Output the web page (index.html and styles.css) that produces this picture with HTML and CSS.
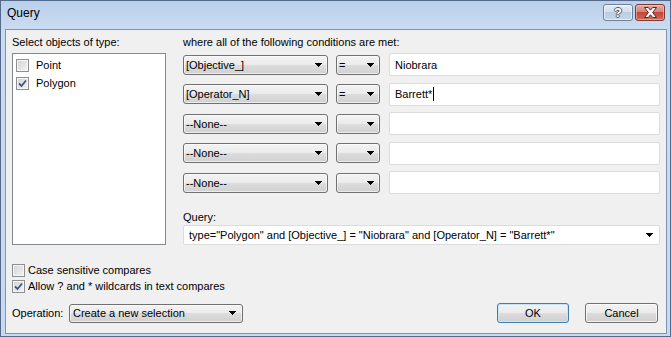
FILE: index.html
```html
<!DOCTYPE html>
<html>
<head>
<meta charset="utf-8">
<title>Query</title>
<link rel="stylesheet" href="styles.css">
</head>
<body>
<div class="window">
  <div class="titlebar">
    <span class="title">Query</span>
    <div class="caption-buttons">
      <div class="cap-btn help">?</div>
      <div class="cap-btn close">
        <svg width="13" height="11" viewBox="0 0 13 11"><polygon points="0.5,0.5 4.3,0.5 6.5,3.2 8.7,0.5 12.5,0.5 8.6,5.5 12.5,10.5 8.7,10.5 6.5,7.8 4.3,10.5 0.5,10.5 4.4,5.5" fill="#fff" stroke="#5a2420" stroke-width="1"/></svg>
      </div>
    </div>
  </div>
  <div class="client">
    <div class="top">
      <div class="left-col">
        <div class="label">Select objects of type:</div>
        <div class="listbox">
          <div class="item"><span class="check"></span><span>Point</span></div>
          <div class="item"><span class="check"><svg class="tick" width="11" height="11" viewBox="0 0 11 11"><polyline points="2,5.5 4.5,8 9,2.5" fill="none" stroke="#3f5484" stroke-width="1.8"/></svg></span><span>Polygon</span></div>
        </div>
      </div>
      <div class="right-col">
        <div class="label">where all of the following conditions are met:</div>
        <div class="conditions">
          <div class="cond-row">
            <div class="combo field"><span class="ctext">[Objective_]</span><svg class="arrow" width="7" height="4" viewBox="0 0 7 4"><polygon points="0,0 7,0 3.5,4" fill="#000"/></svg></div>
            <div class="combo op"><span class="ctext">=</span><svg class="arrow" width="7" height="4" viewBox="0 0 7 4"><polygon points="0,0 7,0 3.5,4" fill="#000"/></svg></div>
            <div class="textbox">Niobrara</div>
          </div>
          <div class="cond-row">
            <div class="combo field"><span class="ctext">[Operator_N]</span><svg class="arrow" width="7" height="4" viewBox="0 0 7 4"><polygon points="0,0 7,0 3.5,4" fill="#000"/></svg></div>
            <div class="combo op"><span class="ctext">=</span><svg class="arrow" width="7" height="4" viewBox="0 0 7 4"><polygon points="0,0 7,0 3.5,4" fill="#000"/></svg></div>
            <div class="textbox">Barrett*<span class="caret"></span></div>
          </div>
          <div class="cond-row">
            <div class="combo field"><span class="ctext">--None--</span><svg class="arrow" width="7" height="4" viewBox="0 0 7 4"><polygon points="0,0 7,0 3.5,4" fill="#000"/></svg></div>
            <div class="combo op"><span class="ctext"></span><svg class="arrow" width="7" height="4" viewBox="0 0 7 4"><polygon points="0,0 7,0 3.5,4" fill="#000"/></svg></div>
            <div class="textbox"></div>
          </div>
          <div class="cond-row">
            <div class="combo field"><span class="ctext">--None--</span><svg class="arrow" width="7" height="4" viewBox="0 0 7 4"><polygon points="0,0 7,0 3.5,4" fill="#000"/></svg></div>
            <div class="combo op"><span class="ctext"></span><svg class="arrow" width="7" height="4" viewBox="0 0 7 4"><polygon points="0,0 7,0 3.5,4" fill="#000"/></svg></div>
            <div class="textbox"></div>
          </div>
          <div class="cond-row">
            <div class="combo field"><span class="ctext">--None--</span><svg class="arrow" width="7" height="4" viewBox="0 0 7 4"><polygon points="0,0 7,0 3.5,4" fill="#000"/></svg></div>
            <div class="combo op"><span class="ctext"></span><svg class="arrow" width="7" height="4" viewBox="0 0 7 4"><polygon points="0,0 7,0 3.5,4" fill="#000"/></svg></div>
            <div class="textbox"></div>
          </div>
        </div>
        <div class="label query-label">Query:</div>
        <div class="edit-combo"><span class="ctext">type="Polygon" and [Objective_] = "Niobrara" and [Operator_N] = "Barrett*"</span><svg class="arrow" width="7" height="4" viewBox="0 0 7 4"><polygon points="0,0 7,0 3.5,4" fill="#000"/></svg></div>
      </div>
    </div>
    <div class="options">
      <div class="opt"><span class="check"></span><span>Case sensitive compares</span></div>
      <div class="opt"><span class="check"><svg class="tick" width="11" height="11" viewBox="0 0 11 11"><polyline points="2,5.5 4.5,8 9,2.5" fill="none" stroke="#3f5484" stroke-width="1.8"/></svg></span><span>Allow ? and * wildcards in text compares</span></div>
    </div>
    <div class="bottom">
      <span class="op-label">Operation:</span>
      <div class="combo operation"><span class="ctext">Create a new selection</span><svg class="arrow" width="7" height="4" viewBox="0 0 7 4"><polygon points="0,0 7,0 3.5,4" fill="#000"/></svg></div>
      <div class="spacer"></div>
      <div class="button default">OK</div>
      <div class="button cancel">Cancel</div>
    </div>
  </div>
</div>
</body>
</html>
```
FILE: styles.css
```css
* { box-sizing: border-box; }
html, body { margin: 0; padding: 0; }
body {
  width: 671px;
  height: 337px;
  overflow: hidden;
  font-family: "Liberation Sans", Tahoma, sans-serif;
  font-size: 11px;
  color: #000;
  background: #c6d8ef;
}
.window {
  width: 671px;
  height: 337px;
  border: 1px solid #55698a;
  background: linear-gradient(#bad0ea, #c9dbf0 28px, #c8daef);
  display: flex;
  flex-direction: column;
  padding: 0 3px 2px 4px;
}
.titlebar {
  height: 28px;
  flex: none;
  display: flex;
  justify-content: space-between;
  align-items: flex-start;
  padding: 5px 2px 0 2px;
}
.title {
  font-size: 12px;
  line-height: 14px;
  color: #000;
}
.caption-buttons {
  display: flex;
  gap: 2px;
  margin-top: -2px;
}
.cap-btn {
  width: 30px;
  height: 17px;
  border-radius: 3px;
  display: flex;
  align-items: center;
  justify-content: center;
}
.help {
  border: 1px solid #6f8199;
  background: linear-gradient(#e3ebf5, #d2deec 50%, #bccde2 50%, #c6d6e9);
  box-shadow: inset 0 0 0 1px rgba(255,255,255,0.55);
  color: #fff;
  font-weight: bold;
  font-size: 13px;
  line-height: 15px;
  text-shadow: -1px 0 #4c5b70, 1px 0 #4c5b70, 0 -1px #4c5b70, 0 1px #4c5b70;
}
.close {
  border: 1px solid #7a3a33;
  background: linear-gradient(#e3aba2, #d47f72 50%, #c2473b 50%, #cf6c5c);
  box-shadow: inset 0 0 0 1px rgba(255,220,210,0.45);
}
.close svg { display: block; }
.client {
  flex: 1;
  background: #f0f0f0;
  border: 1px solid #7d93b2;
  padding: 5px 6px 0 6px;
  display: flex;
  flex-direction: column;
}
.label {
  line-height: 14px;
  height: 14px;
  white-space: nowrap;
}
.top {
  display: grid;
  grid-template-columns: 154px 1fr;
  column-gap: 17px;
}
.listbox {
  margin-top: 4px;
  height: 192px;
  background: #fff;
  border: 1px solid #828790;
  padding: 2px 3px;
}
.item {
  height: 18px;
  display: flex;
  align-items: center;
  gap: 7px;
}
.check {
  width: 13px;
  height: 13px;
  flex: none;
  border: 1px solid #8e8f8f;
  background: linear-gradient(135deg, #d2d4d7, #f3f3f4);
  box-shadow: inset 0 0 0 1px #f6f6f6;
  position: relative;
}
.tick {
  position: absolute;
  left: 0;
  top: 0;
}
.conditions {
  margin-top: 4px;
  display: flex;
  flex-direction: column;
  gap: 6.5px;
}
.cond-row {
  height: 23px;
  display: flex;
  align-items: center;
}
.combo {
  height: 20px;
  border: 1px solid #707070;
  border-radius: 3px;
  background: linear-gradient(#f3f3f3, #ebebeb 50%, #dddddd 50%, #d0d0d0);
  box-shadow: inset 0 0 0 1px rgba(255,255,255,0.6);
  display: flex;
  align-items: center;
  padding: 0 5px 0 2px;
  white-space: nowrap;
}
.ctext { flex: 1; overflow: hidden; }
.arrow { flex: none; display: block; shape-rendering: crispEdges; }
.combo.field { width: 145px; }
.combo.op { width: 44px; margin-left: 8px; }
.textbox {
  flex: 1;
  height: 23px;
  margin-left: 9px;
  background: #fff;
  border: 1px solid #dcdcdc;
  border-radius: 2px;
  padding: 0 5px;
  display: flex;
  align-items: center;
  white-space: nowrap;
}
.caret {
  display: inline-block;
  width: 1px;
  height: 14px;
  background: #000;
  margin-left: 1px;
}
.query-label { margin-top: 16px; }
.edit-combo {
  margin-top: 1px;
  height: 20px;
  background: #fff;
  border: 1px solid #dcdcdc;
  border-radius: 2px;
  display: flex;
  align-items: center;
  padding: 0 6px 0 5px;
  white-space: nowrap;
}
.options {
  margin-top: 17px;
  display: flex;
  flex-direction: column;
}
.opt {
  height: 16px;
  display: flex;
  align-items: center;
  gap: 3px;
}
.bottom {
  margin-top: 9px;
  height: 20px;
  display: flex;
  align-items: center;
}
.op-label { width: 57px; flex: none; }
.combo.operation { width: 174px; height: 19px; padding-left: 3px; padding-right: 6px; }
.spacer { flex: 1; }
.button {
  height: 20px;
  border: 1px solid #707070;
  border-radius: 3px;
  background: linear-gradient(#f2f2f2, #ebebeb 50%, #dddddd 50%, #cfcfcf);
  box-shadow: inset 0 0 0 1px rgba(255,255,255,0.7);
  display: flex;
  align-items: center;
  justify-content: center;
}
.button.default {
  width: 72px;
  border-color: #3c7fb1;
  box-shadow: inset 0 0 0 1px #c6e4f6;
}
.button.cancel {
  width: 73px;
  margin-left: 16px;
  margin-right: 2px;
}
```
